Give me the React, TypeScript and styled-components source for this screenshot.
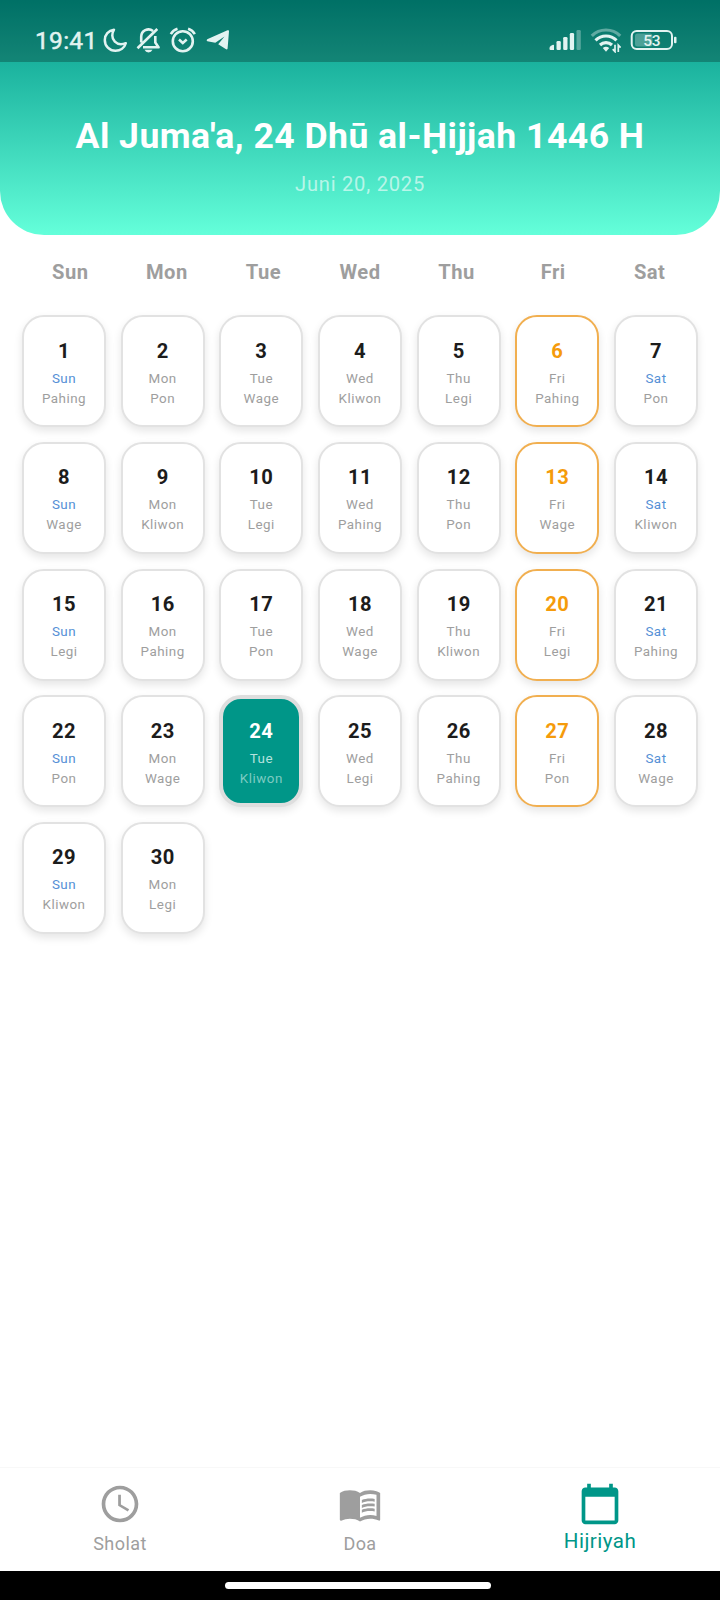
import React from "react";
import styled, { createGlobalStyle } from "styled-components";
import { MdAccessTime, MdCalendarToday, MdMenuBook } from "react-icons/md";

const GlobalStyle = createGlobalStyle`
  *, *::before, *::after { box-sizing: border-box; }
  body { margin: 0; background: #fff; font-family: Roboto, sans-serif; }
`;

const Screen = styled.div`
  display: flex;
  flex-direction: column;
  width: 720px;
  height: 1600px;
  background: #fff;
`;

const Header = styled.header`
  flex: none;
  height: 234.5px;
  border-radius: 0 0 44px 44px;
  background: linear-gradient(#009688, #64ffda);
  overflow: hidden;
  color: #fff;
  text-align: center;
`;

const StatusBar = styled.div`
  display: flex;
  align-items: center;
  justify-content: space-between;
  height: 62px;
  padding: 18px 43.5px 0 35px;
  background: rgba(0, 0, 0, 0.25);
  color: #e2f3f1;
`;

const StatusGroup = styled.div<{ $gap: number }>`
  display: flex;
  align-items: center;
  gap: ${(p) => p.$gap}px;
`;

const Clock = styled.span`
  font-size: 24.5px;
  font-weight: 400;
  line-height: 24px;
  letter-spacing: 0.3px;
  margin: 2px -3px 0 0;
  -webkit-text-stroke: 0.5px currentColor;
`;

const Title = styled.h1`
  margin: 53px 0 0;
  font-size: 35.6px;
  font-weight: 700;
  line-height: 43px;
  letter-spacing: 0.46px;
  white-space: nowrap;
`;

const Subtitle = styled.p`
  margin: 14px 0 0;
  font-size: 20.17px;
  line-height: 24px;
  letter-spacing: 0.75px;
  color: rgba(255, 255, 255, 0.6);
`;

const Weekdays = styled.div`
  display: grid;
  grid-template-columns: repeat(7, 1fr);
  padding: 24px 22px 0;
`;

const Weekday = styled.span`
  font-size: 20.17px;
  font-weight: 700;
  line-height: 26px;
  letter-spacing: 0.46px;
  text-align: center;
  color: #9e9e9e;
`;

const DayGrid = styled.div`
  display: grid;
  grid-template-columns: repeat(7, 1fr);
  grid-auto-rows: 112px;
  gap: 14.67px;
  padding: 30.8px 22px 0;
`;

type Tone = "plain" | "friday" | "selected";

const edge = {
  plain: "2px solid #e2e2e2",
  friday: "2px solid #f1af50",
  selected: "4px solid #dedede",
};

const DayCard = styled.div<{ $tone: Tone }>`
  display: flex;
  flex-direction: column;
  align-items: center;
  justify-content: center;
  padding-top: 5px;
  border: ${(p) => edge[p.$tone]};
  border-radius: 22px;
  background: ${(p) => (p.$tone === "selected" ? "#009688" : "#fff")};
  box-shadow: 0 4px 8px rgba(0, 0, 0, 0.1);
`;

const DayNumber = styled.span<{ $tone: Tone }>`
  font-size: 20.17px;
  font-weight: 700;
  line-height: 24px;
  letter-spacing: 0.46px;
  margin-bottom: 6px;
  color: ${(p) => ({ plain: "#1c1c1c", friday: "#f59b0b", selected: "#fff" })[p.$tone]};
`;

const DayLabel = styled.span<{ $color: string }>`
  font-size: 13.4px;
  line-height: 20px;
  letter-spacing: 0.5px;
  color: ${(p) => p.$color};
`;

const NavBar = styled.nav`
  display: grid;
  grid-template-columns: repeat(3, 1fr);
  height: 104px;
  margin-top: auto;
  border-top: 1px solid #f8f8f8;
  background: #fff;
`;

const NavItem = styled.div`
  display: flex;
  flex-direction: column;
  align-items: center;
  padding-top: 14px;
  color: #9e9e9e;
  &[aria-current] { color: #009688; }
  svg { display: block; }
`;

const NavLabel = styled.span<{ $active?: boolean }>`
  font-size: ${(p) => (p.$active ? 20.6 : 18)}px;
  line-height: 24px;
  letter-spacing: 0.46px;
  margin-top: ${(p) => (p.$active ? 3 : 5.5)}px;
`;

const GestureBar = styled.div`
  display: flex;
  flex: none;
  justify-content: center;
  align-items: center;
  height: 29px;
  padding-right: 4px;
  background: #000;
`;

const GesturePill = styled.div`
  width: 266px;
  height: 7px;
  border-radius: 4px;
  background: #fff;
`;

const MoonIcon = () => (
  <svg width="25" height="26" viewBox="0 0 25 26" fill="none" stroke="currentColor" strokeWidth="2.5" strokeLinejoin="round">
    <path d="M11 2.700C5.500 3.500 1.800 7.800 1.800 13A10.600 10.600 0 0 0 12.500 23.800c4.800 0 9-3 10.300-7.600-1.800.7-3.200 1-4.800 1A8.700 8.700 0 0 1 9.300 8.500c0-2.100.6-4 1.700-5.800z" />
  </svg>
);

const BellOffIcon = () => (
  <svg width="25" height="26" viewBox="0 0 25 26" fill="none" stroke="currentColor" strokeWidth="2.600" strokeLinejoin="round">
    <path d="M5.200 15.500V9.800A7.300 7.300 0 0 1 17 4M19.300 9V15.500L22.500 20.300H7M1.500 21.300 21.300 2" />
    <path d="M8.500 22.800h8q-1.200 2.600-4 2.600t-4-2.600z" fill="currentColor" stroke="none" />
  </svg>
);

const AlarmIcon = () => (
  <svg width="28" height="26" viewBox="0 0 28 26" fill="none" stroke="currentColor" strokeWidth="2.600">
    <circle cx="13.800" cy="14.200" r="10" />
    <path d="M10 12.500 13.800 15.900l3.900-3.400M1.800 7.200Q4 3.200 8.500 1.800M25.800 7.200Q23.600 3.200 19.100 1.800" />
  </svg>
);

const TelegramIcon = () => (
  <svg width="26" height="22" viewBox="-1 0 26 22" fill="currentColor">
    <path d="M1.200 10.300 21.500 1.300q1.700-.6 1.500 1L21.600 19.500q-.4 1.600-1.900.6L12.200 15.200l6.300-7.700-9.200 6.300-8-1.600q-1.500-1 0-1.900z" />
  </svg>
);

const SignalIcon = () => (
  <svg width="33" height="22" viewBox="0 0 33 22" fill="currentColor">
    <path d="M.5 19q0-1.500 1.500-2.300l2-.9q1-.3 1 .8V21H1.500Q.5 21 .5 20z" />
    <rect x="7.500" y="12" width="4.300" height="9" rx="1.300" />
    <rect x="14.200" y="8" width="4.300" height="13" rx="1.300" />
    <rect x="20.800" y="4" width="4.300" height="17" rx="1.300" />
    <rect x="27.500" y="1" width="4.300" height="20" rx="1.300" opacity="0.350" />
  </svg>
);

const WifiIcon = () => (
  <svg width="32" height="26" viewBox="0 0 32 26" fill="none" stroke="currentColor" strokeWidth="3.200">
    <path d="M1.800 8.800a20.300 20.300 0 0 1 28.400 0" opacity="0.400" />
    <path d="M5.500 13.300a15 15 0 0 1 21 0M10 18a9 9 0 0 1 12 0" />
    <path d="M12.800 21q3.200-2.300 6.400 0L16 24.700z" fill="currentColor" stroke="none" />
    <path d="M25 17.800v6.800l-2.300-2.500M28.300 25v-6.800l2.300 2.500" strokeWidth="1.700" />
  </svg>
);

const BatteryIcon = () => (
  <svg width="47" height="22" viewBox="0 0 47 22">
    <rect x="1.700" y="2" width="40.300" height="18" rx="5" fill="none" stroke="currentColor" strokeWidth="2" />
    <rect x="5" y="4.500" width="17.500" height="13" rx="2.500" fill="currentColor" opacity="0.300" />
    <rect x="44" y="7.800" width="2.500" height="6.500" rx="1" fill="currentColor" />
    <text x="21.700" y="16.700" textAnchor="middle" fontFamily="Roboto, sans-serif" fontSize="15.500" fontWeight="500" letterSpacing="-0.400" fill="currentColor">53</text>
  </svg>
);

const weekdays = ["Sun", "Mon", "Tue", "Wed", "Thu", "Fri", "Sat"];
const pasaran = ["Pahing", "Pon", "Wage", "Kliwon", "Legi"];
const today = 24;

const days = Array.from({ length: 30 }, (_, i) => ({
  number: i + 1,
  weekday: weekdays[i % 7],
  market: pasaran[i % 5],
}));

const toneOf = (number: number, weekday: string): Tone =>
  number === today ? "selected" : weekday === "Fri" ? "friday" : "plain";

const weekdayColor = (tone: Tone, weekday: string) => {
  if (tone === "selected") return "#b5e2dd";
  return weekday === "Sun" || weekday === "Sat" ? "#5590d6" : "#9e9e9e";
};

export default function App() {
  return (
    <Screen>
      <GlobalStyle />
      <Header>
        <StatusBar>
          <StatusGroup $gap={8}>
            <Clock>19:41</Clock>
            <MoonIcon />
            <BellOffIcon />
            <AlarmIcon />
            <TelegramIcon />
          </StatusGroup>
          <StatusGroup $gap={8}>
            <SignalIcon />
            <WifiIcon />
            <BatteryIcon />
          </StatusGroup>
        </StatusBar>
        <Title>Al Juma'a, 24 Dhū al-Ḥijjah 1446 H</Title>
        <Subtitle>Juni 20, 2025</Subtitle>
      </Header>
      <Weekdays>
        {weekdays.map((d) => (
          <Weekday key={d}>{d}</Weekday>
        ))}
      </Weekdays>
      <DayGrid>
        {days.map(({ number, weekday, market }) => {
          const tone = toneOf(number, weekday);
          return (
            <DayCard key={number} $tone={tone}>
              <DayNumber $tone={tone}>{number}</DayNumber>
              <DayLabel $color={weekdayColor(tone, weekday)}>{weekday}</DayLabel>
              <DayLabel $color={tone === "selected" ? "#7dcbc2" : "#9e9e9e"}>{market}</DayLabel>
            </DayCard>
          );
        })}
      </DayGrid>
      <NavBar>
        <NavItem>
          <MdAccessTime size={44} />
          <NavLabel>Sholat</NavLabel>
        </NavItem>
        <NavItem>
          <MdMenuBook size={44} />
          <NavLabel>Doa</NavLabel>
        </NavItem>
        <NavItem aria-current="page">
          <MdCalendarToday size={44} />
          <NavLabel $active>Hijriyah</NavLabel>
        </NavItem>
      </NavBar>
      <GestureBar>
        <GesturePill />
      </GestureBar>
    </Screen>
  );
}
